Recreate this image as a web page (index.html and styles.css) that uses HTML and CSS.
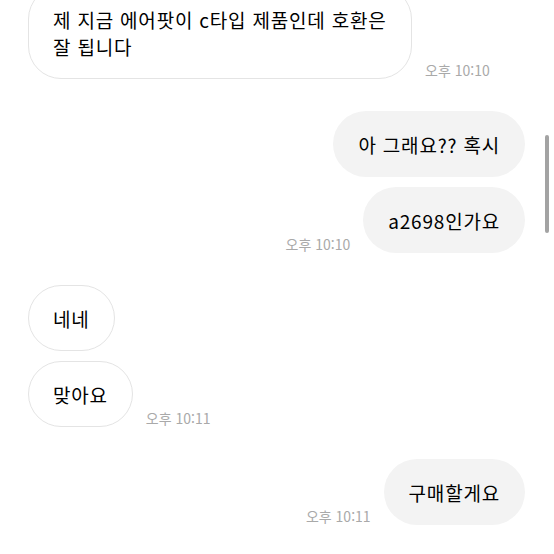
FILE: index.html
```html
<!DOCTYPE html>
<html lang="ko">
<head>
<meta charset="utf-8">
<title>채팅</title>
<link rel="stylesheet" href="styles.css">
</head>
<body>
<div class="chat">
  <div class="group in">
    <div class="row">
      <div class="bubble wide">제 지금 에어팟이 c타입 제품인데 호환은 잘 됩니다</div>
      <span class="time">오후 10:10</span>
    </div>
  </div>
  <div class="group out">
    <div class="row">
      <div class="bubble">아 그래요?? 혹시</div>
    </div>
    <div class="row">
      <span class="time">오후 10:10</span>
      <div class="bubble">a2698인가요</div>
    </div>
  </div>
  <div class="group in">
    <div class="row">
      <div class="bubble">네네</div>
    </div>
    <div class="row">
      <div class="bubble">맞아요</div>
      <span class="time">오후 10:11</span>
    </div>
  </div>
  <div class="group out">
    <div class="row">
      <span class="time">오후 10:11</span>
      <div class="bubble">구매할게요</div>
    </div>
  </div>
</div>
<div class="scrollbar"></div>
</body>
</html>
```

FILE: styles.css
```css
html, body {
  margin: 0;
  padding: 0;
  background: #ffffff;
  overflow: hidden;
}

body {
  font-family: "Noto Sans CJK KR", "Noto Sans", sans-serif;
  color: #000000;
}

.chat {
  display: flex;
  flex-direction: column;
  gap: 32px;
  margin-top: -14px;
  padding: 0 29px 0 28px;
}

.group {
  display: flex;
  flex-direction: column;
  gap: 10px;
}

.row {
  display: flex;
  align-items: flex-end;
  gap: 13px;
}

.out .row {
  justify-content: flex-end;
}

.bubble {
  box-sizing: border-box;
  font-size: 19px;
  font-weight: 400;
  letter-spacing: 0.8px;
  line-height: 27px;
  padding: 19.5px 25px;
  border-radius: 33px;
  white-space: normal;
  word-break: keep-all;
}

.in .bubble {
  background: #ffffff;
  border: 1px solid #e4e4e4;
  padding: 18.5px 24px;
}

.out .bubble {
  background: #f3f3f3;
}

.bubble.wide {
  max-width: 384px;
}

.time {
  flex: none;
  font-size: 14px;
  line-height: 16px;
  color: #a9a9a9;
  margin-bottom: 1px;
  white-space: nowrap;
}

.scrollbar {
  position: fixed;
  top: 135px;
  right: 5px;
  width: 4px;
  height: 98px;
  border-radius: 2px;
  background: #a3a3a3;
}
```
